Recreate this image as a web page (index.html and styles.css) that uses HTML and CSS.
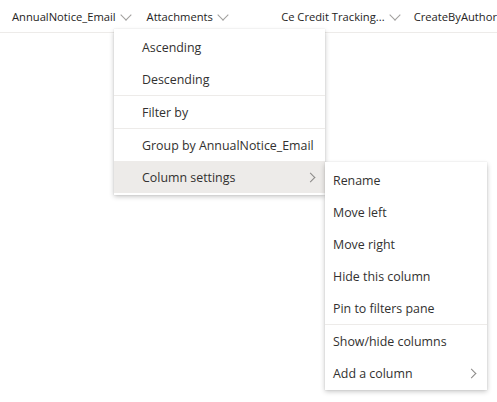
FILE: index.html
```html
<!DOCTYPE html>
<html lang="en">
<head>
    <meta charset="UTF-8">
    <title>Column menu</title>
    <link rel="stylesheet" href="styles.css">
</head>
<body>
    <div class="header">
        <div class="col col-email">AnnualNotice_Email <span class="down"></span></div>
        <div class="col col-attach">Attachments <span class="down"></span></div>
        <div class="col col-credit">Ce Credit Tracking... <span class="down"></span></div>
        <div class="col col-author">CreateByAuthor</div>
    </div>

    <div class="menu main-menu">
        <div class="item">Ascending</div>
        <div class="item">Descending</div>
        <div class="divider"></div>
        <div class="item">Filter by</div>
        <div class="divider"></div>
        <div class="item">Group by AnnualNotice_Email</div>
        <div class="item active">Column settings <span class="right"></span></div>
    </div>

    <div class="menu sub-menu">
        <div class="item">Rename</div>
        <div class="item">Move left</div>
        <div class="item">Move right</div>
        <div class="item">Hide this column</div>
        <div class="item">Pin to filters pane</div>
        <div class="divider"></div>
        <div class="item">Show/hide columns</div>
        <div class="item">Add a column <span class="right"></span></div>
    </div>
</body>
</html>
```

FILE: styles.css
```css
body {
    margin: 0;
    font-family: "Open Sans", "Noto Sans", sans-serif;
    color: #323130;
    background: #fff;
    position: relative;
    width: 497px;
    height: 402px;
    overflow: hidden;
}
.header {
    display: flex;
    height: 31px;
    border-bottom: 1px solid #edebe9;
    align-items: center;
    font-size: 11.2px;
    padding-top: 1px;
    color: #252423;
}
.col {
    display: flex;
    align-items: center;
    white-space: nowrap;
}
.col-email { margin-left: 12px; width: 135px; }
.col-attach { width: 135px; }
.col-credit { width: 133px; }
.down {
    display: inline-block;
    width: 7px;
    height: 7px;
    border-right: 1px solid #a19f9d;
    border-bottom: 1px solid #a19f9d;
    transform: rotate(45deg);
    margin: -4px 0 0 6px;
}
.menu {
    position: absolute;
    background: #fff;
    box-shadow: 0 1.5px 5px rgba(0, 0, 0, 0.24), 0 0 1px rgba(0, 0, 0, 0.14);
    font-size: 12.4px;
}
.main-menu {
    left: 114px;
    top: 29px;
    width: 211px;
    padding: 2px 0 2px;
}
.sub-menu {
    left: 325px;
    top: 162px;
    width: 162px;
    padding: 2px 0 1px;
}
.item {
    height: 32px;
    display: flex;
    align-items: center;
    white-space: nowrap;
    position: relative;
}
.main-menu .item { padding-left: 28px; }
.sub-menu .item { padding-left: 8px; }
.item.active { background: #edebe9; }
.divider {
    height: 1px;
    background: #edebe9;
}
.right {
    position: absolute;
    right: 12px;
    top: 13px;
    width: 6px;
    height: 6px;
    border-right: 1px solid #8a8886;
    border-top: 1px solid #8a8886;
    transform: rotate(45deg);
}
.main-menu .right { right: 11px; }
```
